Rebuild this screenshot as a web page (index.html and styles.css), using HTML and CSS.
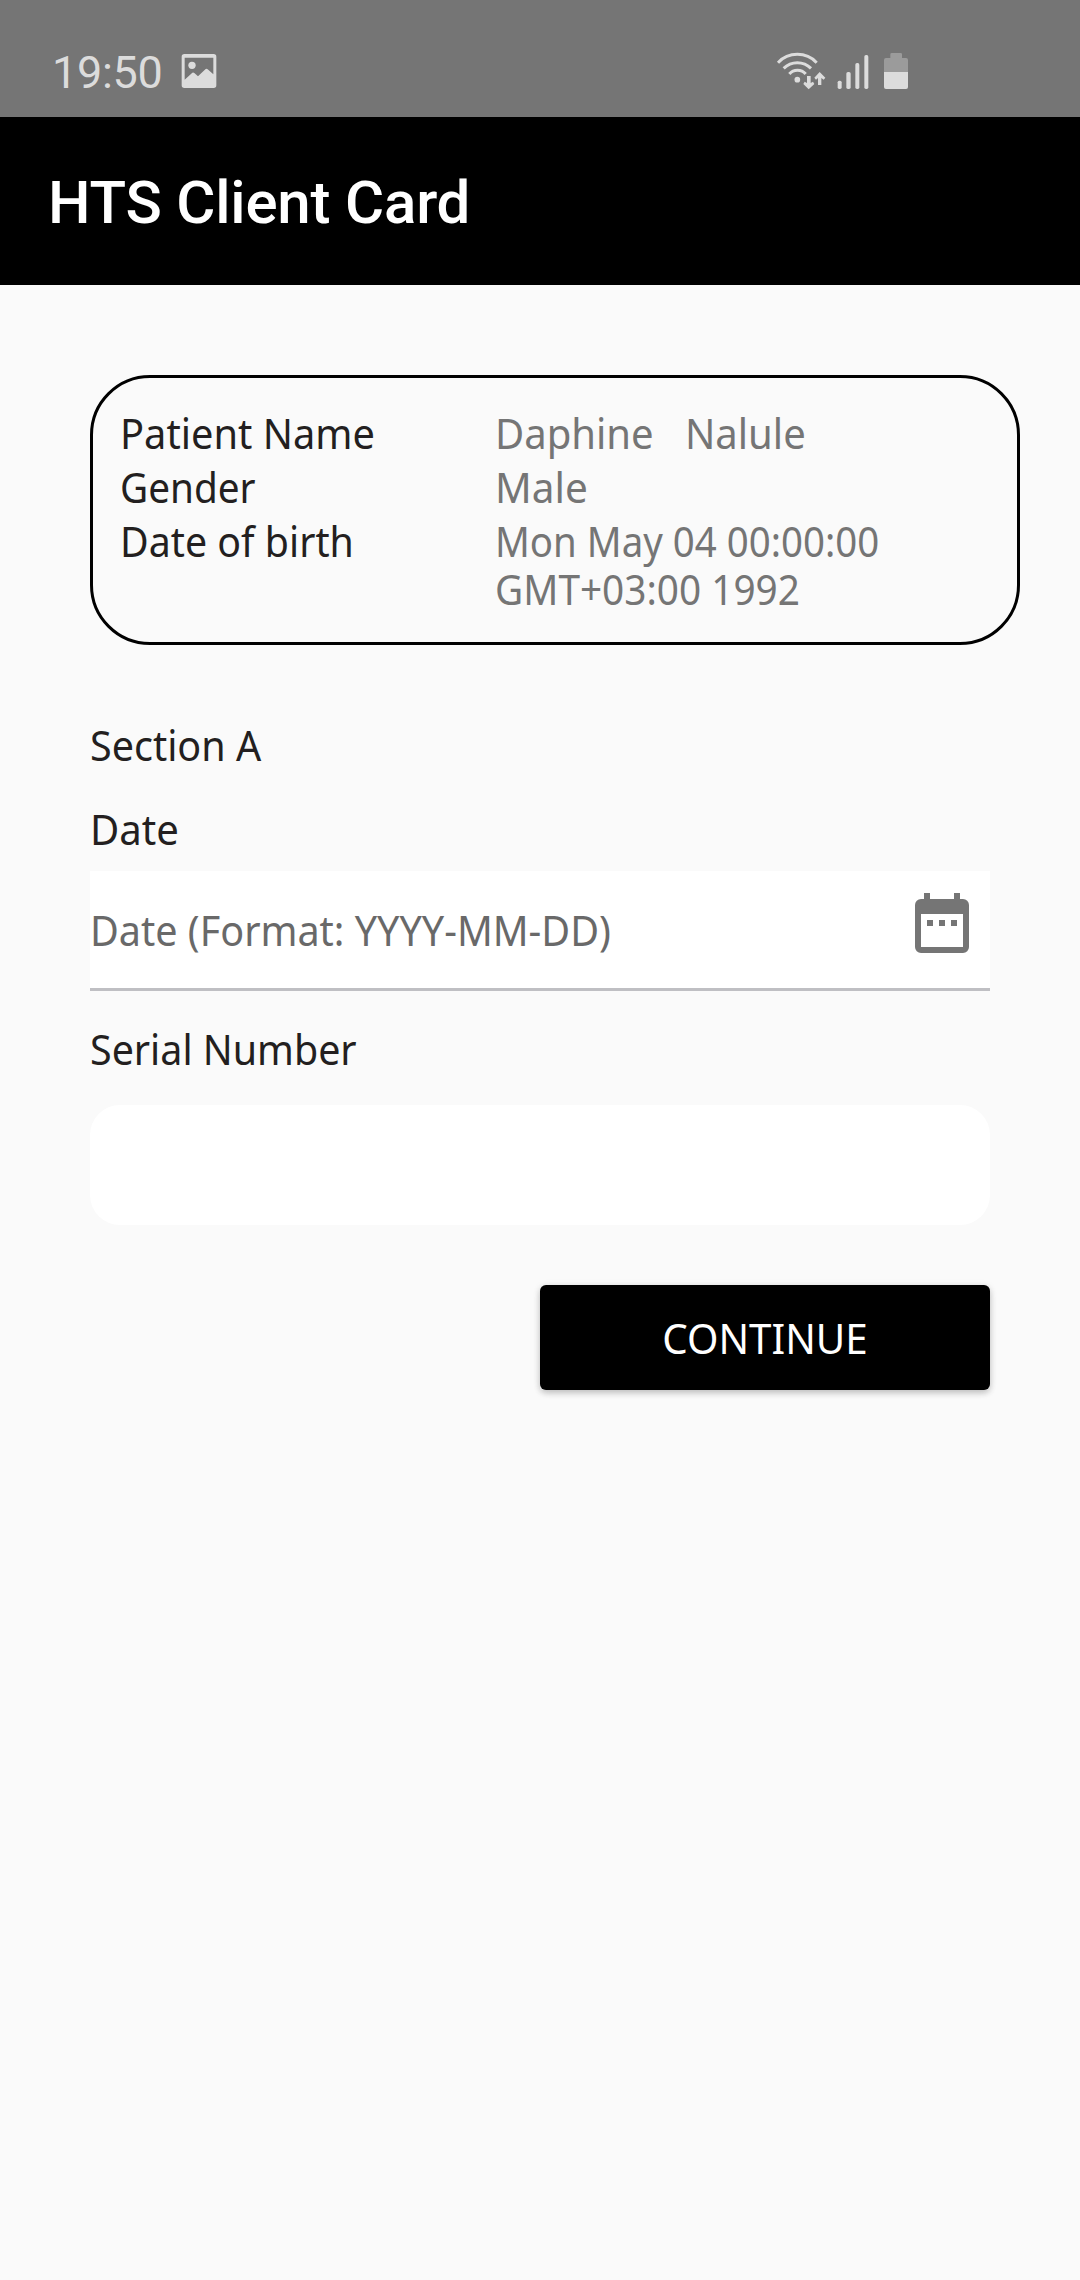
FILE: index.html
```html
<!DOCTYPE html>
<html lang="en">
<head>
<meta charset="utf-8">
<title>HTS Client Card</title>
<link rel="stylesheet" href="styles.css">
</head>
<body>
<div class="status-bar">
  <span class="clock">19:50</span>
  <svg class="picture-icon" width="36" height="36" viewBox="0 0 108 108">
    <path fill="#dcdcdc" fill-rule="evenodd" d="M10 3H98Q106 3 106 11V97Q106 105 98 105H10Q2 105 2 97V11Q2 3 10 3ZM11 14V80L34 59Q37 57 40 60L51 70L74 48Q77 46 80 49L97 64V14Z"/>
    <circle cx="33" cy="37" r="11" fill="#dcdcdc"/>
  </svg>
  <svg class="signal-icons" width="200" height="80" viewBox="0 0 600 240">
    <g fill="none" stroke="#dcdcdc" stroke-width="9">
      <path d="M114 98A80 80 0 0 1 230 98M131 115A58 58 0 0 1 213 115M148 132A32 32 0 0 1 197 132"/>
    </g>
    <g fill="#dcdcdc">
      <circle cx="172" cy="149" r="8.5"/>
      <path d="M201 138H212V159L219 155L223 162L206 178L190 162L194 155L201 159ZM234 165H244V144L251 149L256 143L239 126L223 143L228 149L234 144Z"/>
      <rect x="293" y="152" width="12" height="25" rx="5"/>
      <rect x="319" y="126" width="13" height="51" rx="5"/>
      <rect x="346" y="99" width="12" height="78" rx="5"/>
      <rect x="373" y="75" width="12" height="102" rx="5"/>
      <path d="M432 126H504V171Q504 177 498 177H438Q432 177 432 171Z"/>
    </g>
    <path fill="#9b9b9b" d="M432 126V90Q432 84 438 84H451V73Q451 69 455 69H482Q486 69 486 73V84H498Q504 84 504 90V126Z"/>
  </svg>
</div>
<header class="app-bar"><h1>HTS Client Card</h1></header>
<main class="content">
  <section class="patient-card">
    <span class="label w-name">Patient Name</span><span class="value w-patient">Daphine   Nalule</span>
    <span class="label w-gender">Gender</span><span class="value w-male">Male</span>
    <span class="label w-birth">Date of birth</span>
    <span class="value"><span class="line w-day">Mon May 04 00:00:00</span><span class="line w-zone">GMT+03:00 1992</span></span>
  </section>
  <form class="form">
    <h2 class="section-title">Section A</h2>
    <label class="field-label w-date">Date</label>
    <div class="date-field">
      <span class="placeholder">Date (Format: YYYY-MM-DD)</span>
      <svg width="54" height="60" viewBox="0 0 54 60" fill="#757575">
        <path fill-rule="evenodd" d="M9 0h6v6h24V0h6v6h3a6 6 0 0 1 6 6v42a6 6 0 0 1-6 6H6a6 6 0 0 1-6-6V12a6 6 0 0 1 6-6h3zM6 21v33h42V21z"/>
        <path d="M12 27h6v6h-6zM24 27h6v6h-6zM36 27h6v6h-6z"/>
      </svg>
    </div>
    <label class="field-label serial-label">Serial Number</label>
    <div class="text-field"></div>
    <button type="button" class="continue"><span>CONTINUE</span></button>
  </form>
</main>
</body>
</html>
```
FILE: styles.css
```css
* { box-sizing: border-box; }
body {
  margin: 0;
  min-height: 2280px;
  background: #fafafa;
  color: #231f20;
  font: 42px/48px "Noto Sans", sans-serif;
}
.status-bar {
  display: flex;
  height: 117px;
  padding-left: 52px;
  background: #757575;
}
.clock {
  width: 129px;
  margin-top: 49px;
  color: #dcdcdc;
  font: 45px/48px Roboto, sans-serif;
  letter-spacing: -.3px;
}
.picture-icon { margin-top: 53px; }
.signal-icons { margin: 30px 140px 0 auto; }
.app-bar {
  display: flex;
  align-items: center;
  height: 168px;
  padding: 4px 0 0 48px;
  background: #000;
}
h1 {
  margin: 0;
  color: #fff;
  font: 500 60px/70px Roboto, sans-serif;
  letter-spacing: -.2px;
}
.content { padding: 90px 60px 0 90px; }
.patient-card {
  display: grid;
  grid-template-columns: 375px 1fr;
  row-gap: 6px;
  height: 270px;
  padding: 31px 26px 31px 27px;
  align-content: start;
  justify-items: start;
  border: 3px solid #000;
  border-radius: 60px;
}
.label, .value, .line, .field-label, .section-title, .placeholder {
  white-space: pre;
  transform-origin: left;
}
.value { color: #757575; }
.line { display: block; }
.w-name { transform: scaleX(.947); }
.w-gender { transform: scaleX(.922); }
.w-birth { transform: scaleX(.936); }
.w-patient { transform: scaleX(.953); }
.w-male { transform: scaleX(.965); }
.w-day { transform: scaleX(.915); }
.w-zone { transform: scaleX(.923); }
.w-date { transform: scaleX(.955); }
.form {
  display: flex;
  flex-direction: column;
  margin: 76px 30px 0 0;
}
.section-title {
  margin: 0 0 36px;
  font-size: 42px;
  font-weight: 400;
  transform: scaleX(.94);
}
.date-field {
  display: flex;
  justify-content: space-between;
  height: 120px;
  margin: 18px 0 34px;
  padding-right: 21px;
  background: #fff;
  border-bottom: 3px solid #bfbfc3;
}
.date-field svg { margin-top: 22px; }
.placeholder {
  margin-top: 35px;
  color: #696969;
  transform: scaleX(.941);
}
.serial-label { transform: scaleX(.938); }
.text-field {
  height: 120px;
  margin: 32px 0 60px;
  background: #fff;
  border-radius: 30px;
}
.continue {
  align-self: flex-end;
  width: 450px;
  height: 105px;
  padding: 0;
  border: 0;
  border-radius: 6px;
  background: #000;
  color: #fff;
  font: inherit;
  box-shadow: 0 3px 6px rgba(0, 0, 0, .2), 0 1px 8px rgba(0, 0, 0, .08);
}
.continue span {
  display: inline-block;
  transform: scaleX(.96);
}
```
